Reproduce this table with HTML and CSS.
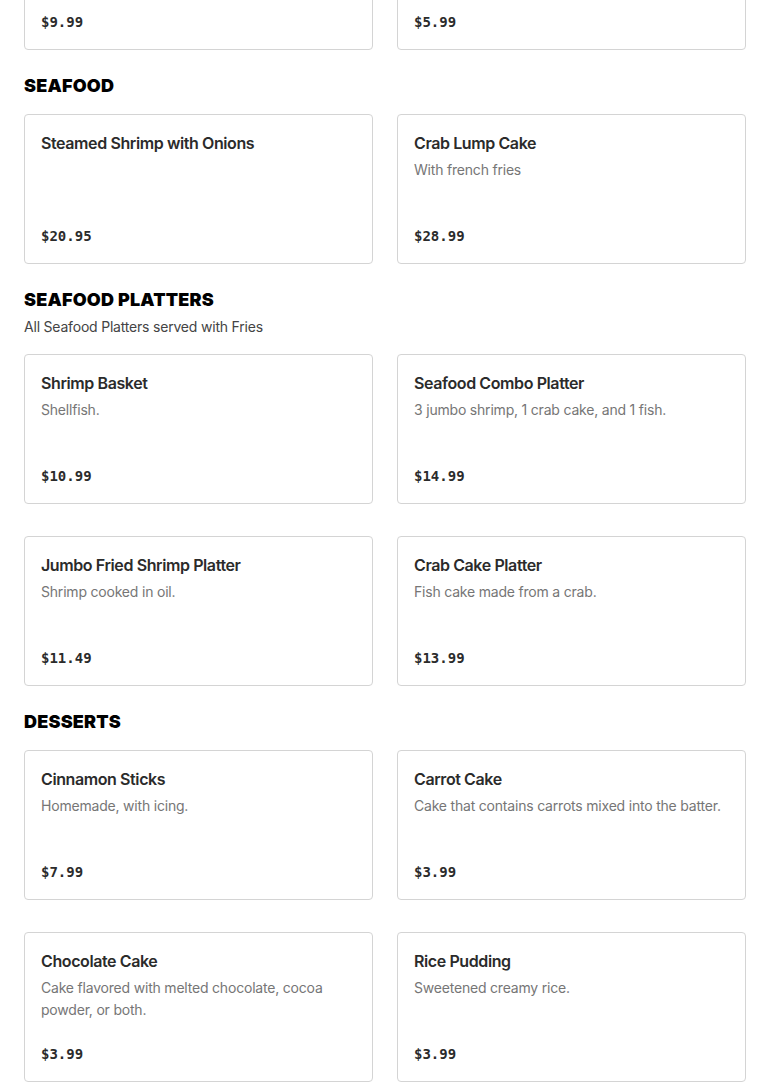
FILE: index.html
```html
<!DOCTYPE html>
<html lang="en">
<head>
<meta charset="utf-8">
<title>Menu</title>
<link rel="stylesheet" href="styles.css">
</head>
<body>
<main class="menu">
  <section class="section section-first">
    <div class="grid">
      <div class="card"><div class="price">$9.99</div></div>
      <div class="card"><div class="price">$5.99</div></div>
    </div>
  </section>

  <section class="section">
    <h2 class="section-title">SEAFOOD</h2>
    <div class="grid">
      <div class="card">
        <h3 class="item-name">Steamed Shrimp with Onions</h3>
        <div class="price">$20.95</div>
      </div>
      <div class="card">
        <h3 class="item-name">Crab Lump Cake</h3>
        <p class="item-desc">With french fries</p>
        <div class="price">$28.99</div>
      </div>
    </div>
  </section>

  <section class="section">
    <h2 class="section-title">SEAFOOD PLATTERS</h2>
    <p class="section-sub">All Seafood Platters served with Fries</p>
    <div class="grid">
      <div class="card">
        <h3 class="item-name">Shrimp Basket</h3>
        <p class="item-desc">Shellfish.</p>
        <div class="price">$10.99</div>
      </div>
      <div class="card">
        <h3 class="item-name">Seafood Combo Platter</h3>
        <p class="item-desc">3 jumbo shrimp, 1 crab cake, and 1 fish.</p>
        <div class="price">$14.99</div>
      </div>
      <div class="card">
        <h3 class="item-name">Jumbo Fried Shrimp Platter</h3>
        <p class="item-desc">Shrimp cooked in oil.</p>
        <div class="price">$11.49</div>
      </div>
      <div class="card">
        <h3 class="item-name">Crab Cake Platter</h3>
        <p class="item-desc">Fish cake made from a crab.</p>
        <div class="price">$13.99</div>
      </div>
    </div>
  </section>

  <section class="section">
    <h2 class="section-title">DESSERTS</h2>
    <div class="grid">
      <div class="card">
        <h3 class="item-name">Cinnamon Sticks</h3>
        <p class="item-desc">Homemade, with icing.</p>
        <div class="price">$7.99</div>
      </div>
      <div class="card">
        <h3 class="item-name">Carrot Cake</h3>
        <p class="item-desc">Cake that contains carrots mixed into the batter.</p>
        <div class="price">$3.99</div>
      </div>
      <div class="card">
        <h3 class="item-name">Chocolate Cake</h3>
        <p class="item-desc">Cake flavored with melted chocolate, cocoa powder, or both.</p>
        <div class="price">$3.99</div>
      </div>
      <div class="card">
        <h3 class="item-name">Rice Pudding</h3>
        <p class="item-desc">Sweetened creamy rice.</p>
        <div class="price">$3.99</div>
      </div>
    </div>
  </section>
</main>
</body>
</html>
```

FILE: styles.css
```css
* { box-sizing: border-box; }

html, body {
  margin: 0;
  padding: 0;
  background: #ffffff;
}

body {
  font-family: Inter, "Noto Sans", "Liberation Sans", sans-serif;
  color: #2b2b2b;
}

.menu {
  padding: 0 24px;
}

.section {
  margin-bottom: 24px;
}

.section-first {
  margin-top: -100px;
}

.section-title {
  margin: 0;
  font-family: Inter, "Liberation Sans", sans-serif;
  font-weight: 900;
  font-size: 18px;
  line-height: 24px;
  color: #000;
  letter-spacing: 0.2px;
}

.section-sub {
  margin: 4px 0 0;
  font-size: 14px;
  line-height: 22px;
  color: #444;
  letter-spacing: -0.2px;
}

.grid {
  margin-top: 16px;
  display: grid;
  grid-template-columns: 1fr 1fr;
  column-gap: 24px;
  row-gap: 32px;
}

.section-first .grid {
  margin-top: 0;
}

.card {
  height: 150px;
  border: 1px solid #d4d4d4;
  border-radius: 4px;
  padding: 16px;
  display: flex;
  flex-direction: column;
}

.item-name {
  margin: 0;
  font-size: 16px;
  line-height: 24px;
  font-weight: 600;
  letter-spacing: -0.4px;
  color: #2b2b2b;
}

.item-desc {
  margin: 4px 0 0;
  font-size: 14px;
  line-height: 22px;
  color: #767676;
  letter-spacing: -0.2px;
}

.price {
  margin-top: auto;
  font-family: "DejaVu Sans Mono", "Liberation Mono", monospace;
  font-weight: 700;
  font-size: 14px;
  line-height: 22px;
  color: #2b2b2b;
}
```
